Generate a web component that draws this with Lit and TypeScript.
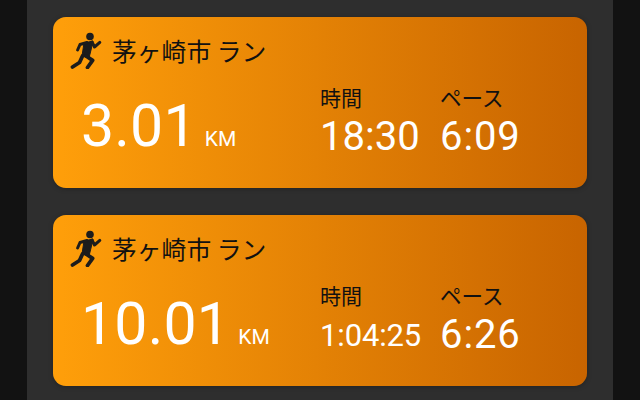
import { LitElement, html, css, svg } from "lit";
import { customElement } from "lit/decorators.js";

interface Run { dist: string; time: string; pace: string; smallTime?: boolean; }

const RUNS: Run[] = [
  { dist: "3.01", time: "18:30", pace: "6:09" },
  { dist: "10.01", time: "1:04:25", pace: "6:26", smallTime: true },
];

const limb = (d: string, w: number) =>
  svg`<path d=${d} fill="none" stroke="currentColor" stroke-width=${w} stroke-linecap="round" stroke-linejoin="round"/>`;

const runner = svg`
  <circle cx="90" cy="36.5" r="3.8"/>
  <path d="M84 43 L93 41 L91 50 L89 58 L82 56 Z" stroke="currentColor" stroke-width="1" stroke-linejoin="round"/>
  ${limb("M87 42.5 L80 44.5 L77.6 50", 3)}
  ${limb("M92 42 L94.5 47 L99.8 42.4", 3)}
  ${limb("M86 56 L92.6 60.4 L87.5 67.5", 3.8)}
  ${limb("M82.5 56 L79.5 62.5 L72.5 67", 3.8)}
`;

@customElement("app-root")
export class AppRoot extends LitElement {
  static styles = css`
    :host {
      display: block;
      width: 640px;
      height: 400px;
      overflow: hidden;
      background: #121212;
      font-family: Roboto, "Noto Sans CJK JP", sans-serif;
    }
    .panel {
      margin: 0 27px;
      height: 400px;
      box-sizing: border-box;
      background: #2e2e2e;
      padding: 17px 26px 0;
      display: flex;
      flex-direction: column;
      gap: 27px;
    }
    .card {
      flex: none;
      height: 171px;
      box-sizing: border-box;
      border-radius: 13px;
      background: linear-gradient(90deg, #ff9f0a 0%, #c86400 100%);
      box-shadow: 0 1px 5px rgba(0, 0, 0, 0.25);
      padding: 14px 0 0 17px;
      display: flex;
      flex-direction: column;
    }
    .title {
      display: flex;
      align-items: center;
      gap: 10px;
      height: 38px;
      color: #111;
      font-family: "Noto Sans CJK JP", sans-serif;
      font-size: 24.8px;
      line-height: 38px;
      white-space: nowrap;
    }
    .icon { width: 32px; height: 37px; flex: none; fill: #1c1c1c; color: #1c1c1c; }
    .body {
      display: flex;
      margin-top: 11px;
    }
    .dist {
      width: 250px;
      box-sizing: border-box;
      padding-left: 11px;
      padding-top: 11px;
      display: flex;
      align-items: baseline;
      gap: 8px;
      color: #fff;
      white-space: nowrap;
    }
    .num { font-size: 59px; line-height: 70px; letter-spacing: 0.2px; }
    .unit { font-size: 21px; line-height: 24px; }
    .col { display: flex; flex-direction: column; white-space: nowrap; }
    .time { width: 120px; }
    .label {
      color: #111;
      font-family: "Noto Sans CJK JP", sans-serif;
      font-size: 21px;
      line-height: 34px;
    }
    .pace .label { font-size: 21.5px; }
    .val {
      color: #fff;
      font-size: 40px;
      line-height: 46px;
    }
    .val.small { font-size: 31px; letter-spacing: -0.15px; line-height: 44px; padding-top: 2px; }
    .pace .val { letter-spacing: 0.9px; }
  `;

  render() {
    return html`<div class="panel">
      ${RUNS.map(
        (r) => html`<div class="card">
          <div class="title">
            <svg class="icon" viewBox="70 32 32 37">${runner}</svg>
            <span>茅ヶ崎市 ラン</span>
          </div>
          <div class="body">
            <div class="dist"><span class="num">${r.dist}</span><span class="unit">KM</span></div>
            <div class="col time">
              <span class="label">時間</span>
              <span class="val ${r.smallTime ? "small" : ""}">${r.time}</span>
            </div>
            <div class="col pace">
              <span class="label">ペース</span>
              <span class="val">${r.pace}</span>
            </div>
          </div>
        </div>`
      )}
    </div>`;
  }
}
